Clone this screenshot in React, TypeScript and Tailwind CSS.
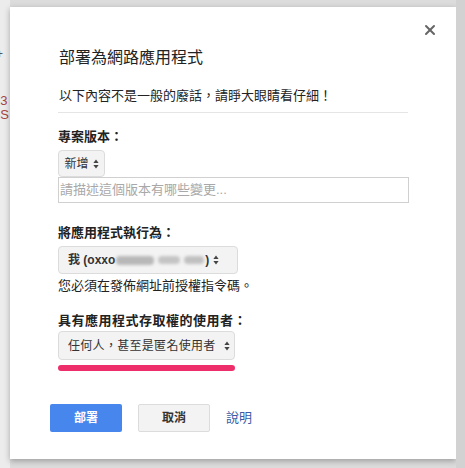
import { X } from 'lucide-react';

const FONT = { fontFamily: '"Liberation Sans", "Noto Sans CJK TC", sans-serif' };

function UpDown() {
  return (
    <svg width="6" height="10" viewBox="0 0 6 10" className="ml-1 shrink-0">
      <path d="M3 0.5 L5.6 4 H0.4 Z" fill="#444" />
      <path d="M3 9.5 L5.6 6 H0.4 Z" fill="#444" />
    </svg>
  );
}

export default function App() {
  return (
    <div
      className="flex h-[468px] w-[465px] overflow-hidden bg-[#dcdcdc] text-[13px] text-[#222]"
      style={FONT}
    >
      {/* page behind the dialog, only a sliver shows */}
      <div className="flex w-[10px] shrink-0 flex-col overflow-hidden bg-[#ececec]">
        <span className="mt-[48px] -ml-[4px] text-[12px] leading-[12px] text-[#555]">+</span>
        <span className="mt-[34px] -ml-[7px] text-[13px] leading-[13px] text-[#a8443f]">23</span>
        <span className="mt-[1px] -ml-[4px] text-[13px] leading-[13px] text-[#a8443f]">-S</span>
      </div>

      {/* dialog */}
      <div className="mt-[7px] flex h-[452px] w-[446px] shrink-0 flex-col bg-white pl-[48px] pr-[47px] shadow-[0_2px_6px_rgba(0,0,0,0.3)]">
        <div className="flex justify-end pt-[15px] -mr-[29px]">
          <X size={16} strokeWidth={3} className="text-[#666]" />
        </div>

        <h1 className="mt-[10px] pl-[1px] text-[16px] leading-[20px] text-[#222]">部署為網路應用程式</h1>

        <p className="mt-[19px] pl-[1px] leading-[18px]">以下內容不是一般的廢話，請睜大眼睛看仔細！</p>
        <div className="mt-[7px] h-px w-[350px] bg-[#e5e5e5]" />

        <p className="mt-[15px] font-bold leading-[18px]">專案版本：</p>
        <div className="mt-[4px] flex h-[27px] w-[47px] items-center justify-center rounded-[4px] border border-[#dcdcdc] bg-[#f3f3f3] text-[12px] text-[#333]">
          新增
          <UpDown />
        </div>
        <div className="flex h-[26px] w-[351px] items-center border border-[#d0d0d0] px-[1px] text-[13px] text-[#a8a8a8]">
          請描述這個版本有哪些變更...
        </div>

        <p className="mt-[21px] font-bold leading-[18px]">將應用程式執行為：</p>
        <div className="mt-[4px] flex h-[28px] w-[180px] items-center rounded-[4px] border border-[#dcdcdc] bg-[#f3f3f3] pl-[9px] pr-[4px] text-[12px] font-bold text-[#333]">
          <span>我 (oxxo</span>
          <span className="ml-[1px] h-[9px] w-[38px] rounded-sm bg-[#b8b8b8] blur-[1.5px]" />
          <span className="ml-[4px] h-[8px] w-[22px] rounded-sm bg-[#c4c4c4] blur-[1.5px]" />
          <span className="ml-[4px] h-[8px] w-[20px] rounded-sm bg-[#c0c0c0] blur-[1.5px]" />
          <span className="ml-[1px]">)</span>
          <UpDown />
        </div>
        <p className="mt-[3px] leading-[18px]">您必須在發佈網址前授權指令碼。</p>

        <p className="mt-[17px] font-bold leading-[18px] tracking-[0.5px]">具有應用程式存取權的使用者：</p>
        <div className="mt-[1px] flex h-[29px] w-[177px] items-center justify-between rounded-[4px] border border-[#dcdcdc] bg-[#f3f3f3] pl-[9px] pr-[4px] text-[12px] tracking-[0.3px] text-[#333]">
          <span>任何人，甚至是匿名使用者</span>
          <UpDown />
        </div>
        <div className="mt-[5px] h-[6px] w-[177px] rounded-full bg-[#ee2e6b]" />

        <div className="mt-[33px] -ml-[8px] flex items-center">
          <button className="h-[28px] w-[72px] rounded-[2px] bg-[#4787ed] text-[12px] font-bold text-white">
            部署
          </button>
          <button className="ml-[16px] h-[28px] w-[72px] rounded-[2px] border border-[#dcdcdc] bg-[#f3f3f3] text-[12px] font-bold text-[#333]">
            取消
          </button>
          <span className="ml-[16px] text-[13px] text-[#3b5ba5]">說明</span>
        </div>
      </div>

      <div className="flex-1 bg-[#d2d2d2]" />
    </div>
  );
}
